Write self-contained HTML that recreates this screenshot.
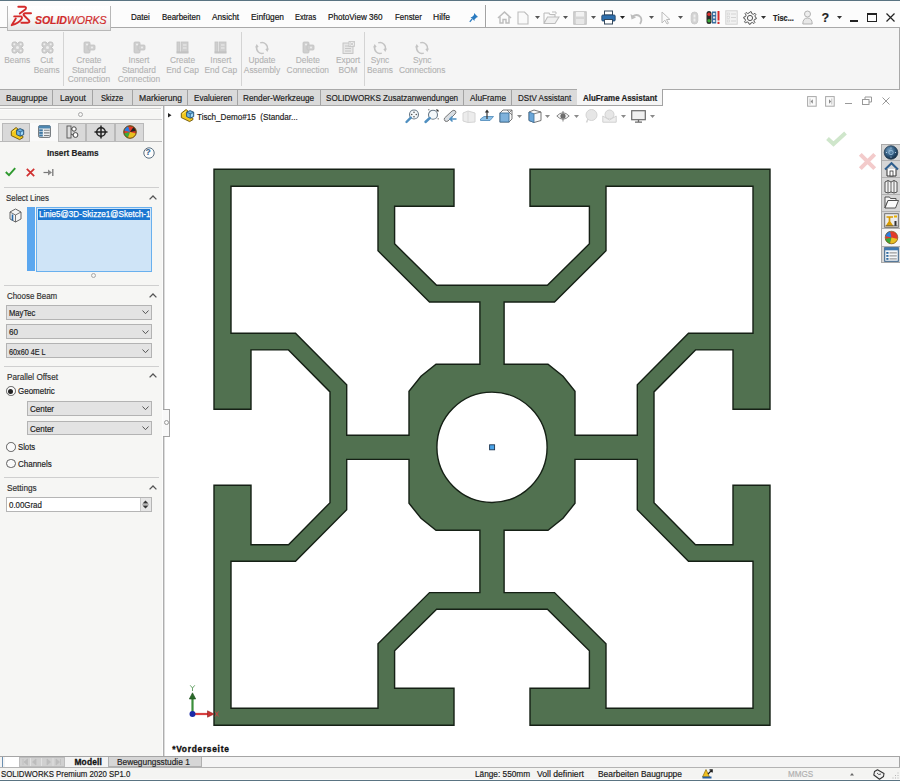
<!DOCTYPE html>
<html><head><meta charset="utf-8">
<style>
*{margin:0;padding:0;box-sizing:border-box}
html,body{width:900px;height:781px;overflow:hidden;background:#f5f5f5;font-family:"Liberation Sans",sans-serif;color:#222;position:relative}
.a{position:absolute}
.t{position:absolute;white-space:nowrap;line-height:1;-webkit-text-stroke-width:0.18px}
svg{overflow:visible}
</style></head><body>
<div class="a" style="left:0px;top:0px;width:900px;height:1px;background:#5a7482;"></div>
<div class="a" style="left:0px;top:1px;width:900px;height:26px;background:#fcfcfc;"></div>
<div class="a" style="left:0px;top:27px;width:900px;height:1px;background:#a9a9a9;"></div>
<div class="a" style="left:0px;top:28px;width:899px;height:61px;background:#f5f5f5;"></div>
<div class="a" style="left:899px;top:28px;width:1px;height:61px;background:#a9a9a9;"></div>
<div class="a" style="left:0px;top:89px;width:900px;height:1px;background:#a9a9a9;"></div>
<div class="a" style="left:164px;top:105px;width:736px;height:651px;background:#ffffff;"></div>
<div class="a" style="left:663px;top:90px;width:237px;height:15px;background:#ffffff;"></div>
<div class="a" style="left:0px;top:105px;width:163px;height:651px;background:#f6f6f4;"></div>
<div class="a" style="left:162px;top:105px;width:1px;height:651px;background:#fcfcfc;"></div>
<div class="a" style="left:163px;top:105px;width:1px;height:651px;background:#aeaeae;"></div>
<div class="a" style="left:164px;top:105px;width:1px;height:651px;background:#dcdcdc;"></div>
<div class="a" style="left:7px;top:5.5px;width:104px;height:25px;background:linear-gradient(#ffffff 0%,#fafafa 45%,#e6e6e6 100%);border:1px solid #b8b8b8;border-top:none"></div>
<svg class="a" style="left:8px;top:4px" width="26" height="24" viewBox="0 0 26 24">
<path d="M10.3 2.8 L17 2.8 Q18.6 3.2 17.6 5.2 L11.8 9.6" fill="none" stroke="#d42a2a" stroke-width="1.9" stroke-linecap="round" stroke-linejoin="round"/>
<path d="M6.2 12.4 L13 12.4 Q14.6 13 13.6 15 Q10.5 19.5 3.7 21.2 L7.8 14.6" fill="none" stroke="#d42a2a" stroke-width="1.9" stroke-linecap="round" stroke-linejoin="round"/>
<path d="M23 9.3 L17 9.3 Q15 9.6 15.8 11.3 L21 16.4 Q22.2 18.4 19.6 18.7 L13.4 18.7" fill="none" stroke="#d42a2a" stroke-width="2" stroke-linecap="round" stroke-linejoin="round"/>
</svg>
<div class="t" style="left:35px;top:14.6px;font-size:10.6px;color:#d02a2a;font-style:italic;letter-spacing:-0.1px"><b>SOLID</b>WORKS</div>
<div class="t" style="left:130.7px;top:12.9px;font-size:8.9px;color:#111;transform:scaleX(0.9096);transform-origin:0 0;">Datei</div>
<div class="t" style="left:161.6px;top:12.9px;font-size:8.9px;color:#111;transform:scaleX(0.892);transform-origin:0 0;">Bearbeiten</div>
<div class="t" style="left:211.8px;top:12.9px;font-size:8.9px;color:#111;transform:scaleX(0.9285);transform-origin:0 0;">Ansicht</div>
<div class="t" style="left:250.7px;top:12.9px;font-size:8.9px;color:#111;transform:scaleX(0.942);transform-origin:0 0;">Einfügen</div>
<div class="t" style="left:295.4px;top:12.9px;font-size:8.9px;color:#111;transform:scaleX(0.8445);transform-origin:0 0;">Extras</div>
<div class="t" style="left:328.4px;top:12.9px;font-size:8.9px;color:#111;transform:scaleX(0.9177);transform-origin:0 0;">PhotoView 360</div>
<div class="t" style="left:394.9px;top:12.9px;font-size:8.9px;color:#111;transform:scaleX(0.8915);transform-origin:0 0;">Fenster</div>
<div class="t" style="left:433.3px;top:12.9px;font-size:8.9px;color:#111;transform:scaleX(0.9604);transform-origin:0 0;">Hilfe</div>
<div class="a" style="left:485px;top:5px;width:1px;height:22px;background:#a3a3a3;"></div>
<div class="a" style="left:486px;top:5px;width:1px;height:22px;background:#ffffff;"></div>
<svg class="a" style="left:469px;top:12px" width="10" height="11" viewBox="0 0 10 11">
<path d="M5 1 L9 5 L7.5 5.5 L5.5 7.5 L5.5 9 L1.5 5 L3 5 L5 3 Z" fill="#2a7ac0"/><path d="M3.2 6.8 L0.8 9.8" stroke="#2a7ac0" stroke-width="1.3"/></svg>
<svg class="a" style="left:497px;top:11px" width="15" height="13" viewBox="0 0 15 13">
<path d="M1 7 L7.5 1 L14 7" fill="none" stroke="#bdbdbd" stroke-width="1.6"/><path d="M3 6 L3 12 L6 12 L6 8.5 L9 8.5 L9 12 L12 12 L12 6" fill="none" stroke="#bdbdbd" stroke-width="1.4"/></svg>
<svg class="a" style="left:517px;top:11px" width="12" height="14" viewBox="0 0 12 14">
<path d="M1 1 L7.5 1 L11 4.5 L11 13 L1 13 Z" fill="#fafafa" stroke="#bdbdbd" stroke-width="1.1"/></svg>
<svg class="a" style="left:534.5px;top:16.0px" width="5" height="3"><path d="M0 0 L5 0 L2.5 3Z" fill="#555"/></svg>
<svg class="a" style="left:543px;top:11px" width="17" height="14" viewBox="0 0 17 14">
<path d="M1 2 L6 2 L7 3.5 L12 3.5 L12 6 M1 2 L1 12.5 L12 12.5 L16 6 L4.5 6 L1 12.5" fill="#f0f0f0" stroke="#bdbdbd" stroke-width="1.1"/><path d="M9 1 L13 1 L13 3" fill="none" stroke="#bdbdbd" stroke-width="1"/></svg>
<svg class="a" style="left:563.1px;top:16.0px" width="5" height="3"><path d="M0 0 L5 0 L2.5 3Z" fill="#555"/></svg>
<svg class="a" style="left:573px;top:11px" width="14" height="14" viewBox="0 0 14 14">
<rect x="0.8" y="0.8" width="12.4" height="12.4" fill="#d6d6d6" stroke="#bdbdbd" stroke-width="1"/><rect x="3" y="1" width="8" height="4.5" fill="#f2f2f2"/><rect x="3" y="8" width="8" height="5" fill="#e8e8e8"/></svg>
<svg class="a" style="left:591.2px;top:16.0px" width="5" height="3"><path d="M0 0 L5 0 L2.5 3Z" fill="#555"/></svg>
<svg class="a" style="left:601px;top:10px" width="15" height="15" viewBox="0 0 15 15">
<rect x="3.5" y="1" width="8" height="4" fill="#fff" stroke="#33475a" stroke-width="1"/>
<rect x="0.8" y="5" width="13.4" height="6" rx="1" fill="#2d6fae" stroke="#1f3f60" stroke-width="0.8"/>
<rect x="3.5" y="9.5" width="8" height="4.5" fill="#fff" stroke="#33475a" stroke-width="1"/></svg>
<svg class="a" style="left:620.0px;top:16.0px" width="5" height="3"><path d="M0 0 L5 0 L2.5 3Z" fill="#222"/></svg>
<svg class="a" style="left:630px;top:12px" width="13" height="13" viewBox="0 0 13 13">
<path d="M2 5 Q7 1 10.5 5 Q12.5 8 10 12" fill="none" stroke="#bdbdbd" stroke-width="1.8"/><path d="M0.5 2 L1.5 7.5 L6 5.5Z" fill="#bdbdbd"/></svg>
<svg class="a" style="left:648.5px;top:16.0px" width="5" height="3"><path d="M0 0 L5 0 L2.5 3Z" fill="#555"/></svg>
<svg class="a" style="left:661px;top:11px" width="10" height="14" viewBox="0 0 10 14">
<path d="M1 1 L1 12 L3.8 9.2 L6 13 L7.5 12.2 L5.5 8.5 L9 8.5 Z" fill="#fafafa" stroke="#bdbdbd" stroke-width="1"/></svg>
<svg class="a" style="left:677.5px;top:16.0px" width="5" height="3"><path d="M0 0 L5 0 L2.5 3Z" fill="#555"/></svg>
<svg class="a" style="left:690px;top:11px" width="9" height="14" viewBox="0 0 9 14">
<rect x="1.2" y="1" width="6.6" height="12" rx="3.3" fill="#d2d2d2" stroke="#c8c8c8" stroke-width="0.8"/><rect x="3.5" y="3.5" width="2" height="3" fill="#eee"/><rect x="3.5" y="7.5" width="2" height="3" fill="#eee"/></svg>
<svg class="a" style="left:706px;top:10px" width="15" height="15" viewBox="0 0 15 15">
<rect x="0.5" y="1" width="5" height="13" rx="2.5" fill="#2a2a2a"/><circle cx="3" cy="4.3" r="1.7" fill="#e23030"/><circle cx="3" cy="10.7" r="1.7" fill="#38a838"/>
<rect x="6" y="1.5" width="4.2" height="12" fill="#3a6f9e"/><rect x="7" y="3" width="2.2" height="2" fill="#d8e4ee"/><rect x="7" y="6.5" width="2.2" height="2" fill="#d8e4ee"/><rect x="7" y="10" width="2.2" height="2" fill="#d8e4ee"/>
<rect x="11.5" y="1" width="2" height="9.5" fill="#d42a2a"/><rect x="11.5" y="11.8" width="2" height="2.2" fill="#d42a2a"/></svg>
<svg class="a" style="left:725px;top:10px" width="13" height="15" viewBox="0 0 13 15">
<rect x="0.8" y="0.8" width="11.4" height="13.4" fill="#f2f2f2" stroke="#d2d2d2" stroke-width="1"/>
<path d="M6 4 L11 4 M6 7.5 L11 7.5 M6 11 L11 11" stroke="#d4d4d4" stroke-width="1"/><rect x="2.2" y="3" width="2.2" height="2" fill="none" stroke="#d4d4d4" stroke-width="0.7"/><rect x="2.2" y="6.5" width="2.2" height="2" fill="none" stroke="#d4d4d4" stroke-width="0.7"/><rect x="2.2" y="10" width="2.2" height="2" fill="none" stroke="#d4d4d4" stroke-width="0.7"/></svg>
<svg class="a" style="left:743px;top:11px" width="14" height="14" viewBox="0 0 14 14">
<path d="M7 0.8 L8.4 0.8 L8.8 2.6 L10.3 3.3 L11.9 2.3 L12.9 3.3 L11.9 4.9 L12.5 6.4 L13.2 6.6 L13.2 8 L11.5 8.4 L10.9 9.9 L11.9 11.5 L10.9 12.5 L9.3 11.5 L7.8 12.1 L7.4 13.2 L6 13.2 L5.6 11.5 L4.1 10.9 L2.5 11.9 L1.5 10.9 L2.5 9.3 L1.9 7.8 L0.8 7.4 L0.8 6 L2.5 5.6 L3.1 4.1 L2.1 2.5 L3.1 1.5 L4.7 2.5 L6.2 1.9 Z" fill="#f8f8f8" stroke="#555" stroke-width="1"/>
<circle cx="7" cy="7" r="2.6" fill="none" stroke="#555" stroke-width="1"/></svg>
<svg class="a" style="left:761.4px;top:16.0px" width="5" height="3"><path d="M0 0 L5 0 L2.5 3Z" fill="#333"/></svg>
<div class="t" style="left:773.4px;top:13.5px;font-size:8.6px;font-weight:bold;color:#222;transform:scaleX(0.86);transform-origin:0 0;">Tisc...</div>
<svg class="a" style="left:802px;top:10px" width="11" height="15" viewBox="0 0 11 15">
<circle cx="5.5" cy="4" r="3" fill="#eee" stroke="#aaa" stroke-width="0.9"/><path d="M0.8 14 Q0.8 8 5.5 8 Q10.2 8 10.2 14Z" fill="#e8e8e8" stroke="#aaa" stroke-width="0.9"/></svg>
<div class="t" style="left:821.5px;top:11.5px;font-size:12.5px;font-weight:bold;color:#222">?</div>
<svg class="a" style="left:836.5px;top:16.0px" width="5" height="3"><path d="M0 0 L5 0 L2.5 3Z" fill="#333"/></svg>
<div class="a" style="left:850px;top:19.5px;width:7.5px;height:2px;background:#222;"></div>
<div class="a" style="left:867px;top:13px;width:10px;height:9px;border:1.2px solid #222;border-top-width:2px"></div>
<svg class="a" style="left:886px;top:13px" width="9" height="9"><path d="M0.5 0.5 L8.5 8.5 M8.5 0.5 L0.5 8.5" stroke="#222" stroke-width="1.2"/></svg>
<div class="a" style="left:63px;top:32px;width:1px;height:54px;background:#d4d4d4;"></div>
<div class="a" style="left:240.5px;top:32px;width:1px;height:54px;background:#d4d4d4;"></div>
<div class="a" style="left:364px;top:32px;width:1px;height:54px;background:#d4d4d4;"></div>
<svg class="a" style="left:10.7px;top:41.0px" width="13" height="13" viewBox="0 0 13 13">
<path d="M1 3 Q1 1 3 1 L5 1 L6.5 3 L8 1 L10 1 Q12 1 12 3 L12 5 L10 6.5 L12 8 L12 10 Q12 12 10 12 L8 12 L6.5 10 L5 12 L3 12 Q1 12 1 10 L1 8 L3 6.5 L1 5 Z" fill="#cfcfcf" stroke="#c2c2c2" stroke-width="1"/>
<circle cx="6.5" cy="6.5" r="1.5" fill="#eee"/><circle cx="3.3" cy="3.3" r="1" fill="#eee"/><circle cx="9.7" cy="3.3" r="1" fill="#eee"/><circle cx="3.3" cy="9.7" r="1" fill="#eee"/><circle cx="9.7" cy="9.7" r="1" fill="#eee"/></svg>
<svg class="a" style="left:40.5px;top:41.0px" width="13" height="13" viewBox="0 0 13 13">
<path d="M1 3 Q1 1 3 1 L5 1 L6.5 3 L8 1 L10 1 Q12 1 12 3 L12 5 L10 6.5 L12 8 L12 10 Q12 12 10 12 L8 12 L6.5 10 L5 12 L3 12 Q1 12 1 10 L1 8 L3 6.5 L1 5 Z" fill="#cfcfcf" stroke="#c2c2c2" stroke-width="1"/>
<circle cx="6.5" cy="6.5" r="1.5" fill="#eee"/><circle cx="3.3" cy="3.3" r="1" fill="#eee"/><circle cx="9.7" cy="3.3" r="1" fill="#eee"/><circle cx="3.3" cy="9.7" r="1" fill="#eee"/><circle cx="9.7" cy="9.7" r="1" fill="#eee"/></svg>
<svg class="a" style="left:81.9px;top:41.0px" width="14" height="13" viewBox="0 0 14 13">
<rect x="2" y="1" width="6" height="11" rx="1" fill="#cfcfcf" stroke="#c2c2c2" stroke-width="0.8"/><rect x="6" y="4" width="7" height="5" rx="1" fill="#cfcfcf" stroke="#c2c2c2" stroke-width="0.8"/><circle cx="5" cy="3.5" r="1" fill="#eee"/><circle cx="10" cy="6.5" r="1" fill="#eee"/></svg>
<svg class="a" style="left:131.9px;top:41.0px" width="14" height="13" viewBox="0 0 14 13">
<rect x="2" y="1" width="6" height="11" rx="1" fill="#cfcfcf" stroke="#c2c2c2" stroke-width="0.8"/><rect x="6" y="4" width="7" height="5" rx="1" fill="#cfcfcf" stroke="#c2c2c2" stroke-width="0.8"/><circle cx="5" cy="3.5" r="1" fill="#eee"/><circle cx="10" cy="6.5" r="1" fill="#eee"/></svg>
<svg class="a" style="left:176.0px;top:41.0px" width="13" height="13" viewBox="0 0 13 13">
<rect x="1" y="1" width="3" height="10" fill="#cfcfcf" stroke="#c2c2c2" stroke-width="0.8"/><rect x="5.5" y="1" width="6.5" height="10" fill="#cfcfcf" stroke="#c2c2c2" stroke-width="0.8"/><rect x="0.5" y="10.5" width="12" height="2" fill="#c2c2c2"/><path d="M7 4 L10.5 4 M7 7 L10.5 7" stroke="#eee" stroke-width="1"/></svg>
<svg class="a" style="left:214.3px;top:41.0px" width="13" height="13" viewBox="0 0 13 13">
<rect x="1" y="1" width="3" height="10" fill="#cfcfcf" stroke="#c2c2c2" stroke-width="0.8"/><rect x="5.5" y="1" width="6.5" height="10" fill="#cfcfcf" stroke="#c2c2c2" stroke-width="0.8"/><rect x="0.5" y="10.5" width="12" height="2" fill="#c2c2c2"/><path d="M7 4 L10.5 4 M7 7 L10.5 7" stroke="#eee" stroke-width="1"/></svg>
<svg class="a" style="left:255px;top:41px" width="14" height="14" viewBox="0 0 14 14">
<path d="M5.2 1.9 A5.4 5.4 0 0 1 12.2 8.4" fill="none" stroke="#c4c4c4" stroke-width="1.5"/><path d="M8.8 12.1 A5.4 5.4 0 0 1 1.8 5.6" fill="none" stroke="#c4c4c4" stroke-width="1.5"/>
<path d="M10.3 8 L12.3 11 L14 7.6Z" fill="#c4c4c4"/><path d="M3.7 6 L1.7 3 L0 6.4Z" fill="#c4c4c4"/></svg>
<svg class="a" style="left:300.8px;top:41.0px" width="14" height="13" viewBox="0 0 14 13">
<rect x="2" y="1" width="6" height="11" rx="1" fill="#cfcfcf" stroke="#c2c2c2" stroke-width="0.8"/><rect x="6" y="4" width="7" height="5" rx="1" fill="#cfcfcf" stroke="#c2c2c2" stroke-width="0.8"/><circle cx="5" cy="3.5" r="1" fill="#eee"/><circle cx="10" cy="6.5" r="1" fill="#eee"/></svg>
<svg class="a" style="left:341.5px;top:41.0px" width="13" height="13" viewBox="0 0 13 13">
<rect x="1" y="2" width="10" height="10.5" fill="#e6e6e6" stroke="#c2c2c2" stroke-width="0.9"/><path d="M3 5 L9 5 M3 7.5 L9 7.5 M3 10 L9 10" stroke="#c2c2c2" stroke-width="0.9"/><rect x="7" y="0.5" width="5.5" height="5" fill="#eee" stroke="#c2c2c2" stroke-width="0.8"/><path d="M8 1.5 L11.5 4.5 M11.5 1.5 L8 4.5" stroke="#c2c2c2" stroke-width="0.8"/></svg>
<svg class="a" style="left:373px;top:41px" width="14" height="14" viewBox="0 0 14 14">
<path d="M5.2 1.9 A5.4 5.4 0 0 1 12.2 8.4" fill="none" stroke="#c4c4c4" stroke-width="1.5"/><path d="M8.8 12.1 A5.4 5.4 0 0 1 1.8 5.6" fill="none" stroke="#c4c4c4" stroke-width="1.5"/>
<path d="M10.3 8 L12.3 11 L14 7.6Z" fill="#c4c4c4"/><path d="M3.7 6 L1.7 3 L0 6.4Z" fill="#c4c4c4"/></svg>
<svg class="a" style="left:415.2px;top:41px" width="14" height="14" viewBox="0 0 14 14">
<path d="M5.2 1.9 A5.4 5.4 0 0 1 12.2 8.4" fill="none" stroke="#c4c4c4" stroke-width="1.5"/><path d="M8.8 12.1 A5.4 5.4 0 0 1 1.8 5.6" fill="none" stroke="#c4c4c4" stroke-width="1.5"/>
<path d="M10.3 8 L12.3 11 L14 7.6Z" fill="#c4c4c4"/><path d="M3.7 6 L1.7 3 L0 6.4Z" fill="#c4c4c4"/></svg>
<div class="t" style="left:-17.8px;top:56.4px;width:70px;text-align:center;font-size:8.4px;color:#b2b2b2;-webkit-text-stroke-width:0.1px">Beams</div>
<div class="t" style="left:11.7px;top:56.4px;width:70px;text-align:center;font-size:8.4px;color:#b2b2b2;-webkit-text-stroke-width:0.1px">Cut</div>
<div class="t" style="left:11.7px;top:65.8px;width:70px;text-align:center;font-size:8.4px;color:#b2b2b2;-webkit-text-stroke-width:0.1px">Beams</div>
<div class="t" style="left:53.9px;top:56.4px;width:70px;text-align:center;font-size:8.4px;color:#b2b2b2;-webkit-text-stroke-width:0.1px">Create</div>
<div class="t" style="left:53.9px;top:65.8px;width:70px;text-align:center;font-size:8.4px;color:#b2b2b2;-webkit-text-stroke-width:0.1px">Standard</div>
<div class="t" style="left:53.9px;top:75.2px;width:70px;text-align:center;font-size:8.4px;color:#b2b2b2;-webkit-text-stroke-width:0.1px">Connection</div>
<div class="t" style="left:103.9px;top:56.4px;width:70px;text-align:center;font-size:8.4px;color:#b2b2b2;-webkit-text-stroke-width:0.1px">Insert</div>
<div class="t" style="left:103.9px;top:65.8px;width:70px;text-align:center;font-size:8.4px;color:#b2b2b2;-webkit-text-stroke-width:0.1px">Standard</div>
<div class="t" style="left:103.9px;top:75.2px;width:70px;text-align:center;font-size:8.4px;color:#b2b2b2;-webkit-text-stroke-width:0.1px">Connection</div>
<div class="t" style="left:147.5px;top:56.4px;width:70px;text-align:center;font-size:8.4px;color:#b2b2b2;-webkit-text-stroke-width:0.1px">Create</div>
<div class="t" style="left:147.5px;top:65.8px;width:70px;text-align:center;font-size:8.4px;color:#b2b2b2;-webkit-text-stroke-width:0.1px">End Cap</div>
<div class="t" style="left:185.8px;top:56.4px;width:70px;text-align:center;font-size:8.4px;color:#b2b2b2;-webkit-text-stroke-width:0.1px">Insert</div>
<div class="t" style="left:185.8px;top:65.8px;width:70px;text-align:center;font-size:8.4px;color:#b2b2b2;-webkit-text-stroke-width:0.1px">End Cap</div>
<div class="t" style="left:227.0px;top:56.4px;width:70px;text-align:center;font-size:8.4px;color:#b2b2b2;-webkit-text-stroke-width:0.1px">Update</div>
<div class="t" style="left:227.0px;top:65.8px;width:70px;text-align:center;font-size:8.4px;color:#b2b2b2;-webkit-text-stroke-width:0.1px">Assembly</div>
<div class="t" style="left:272.8px;top:56.4px;width:70px;text-align:center;font-size:8.4px;color:#b2b2b2;-webkit-text-stroke-width:0.1px">Delete</div>
<div class="t" style="left:272.8px;top:65.8px;width:70px;text-align:center;font-size:8.4px;color:#b2b2b2;-webkit-text-stroke-width:0.1px">Connection</div>
<div class="t" style="left:313.0px;top:56.4px;width:70px;text-align:center;font-size:8.4px;color:#b2b2b2;-webkit-text-stroke-width:0.1px">Export</div>
<div class="t" style="left:313.0px;top:65.8px;width:70px;text-align:center;font-size:8.4px;color:#b2b2b2;-webkit-text-stroke-width:0.1px">BOM</div>
<div class="t" style="left:345.0px;top:56.4px;width:70px;text-align:center;font-size:8.4px;color:#b2b2b2;-webkit-text-stroke-width:0.1px">Sync</div>
<div class="t" style="left:345.0px;top:65.8px;width:70px;text-align:center;font-size:8.4px;color:#b2b2b2;-webkit-text-stroke-width:0.1px">Beams</div>
<div class="t" style="left:387.2px;top:56.4px;width:70px;text-align:center;font-size:8.4px;color:#b2b2b2;-webkit-text-stroke-width:0.1px">Sync</div>
<div class="t" style="left:387.2px;top:65.8px;width:70px;text-align:center;font-size:8.4px;color:#b2b2b2;-webkit-text-stroke-width:0.1px">Connections</div>
<div class="a" style="left:0px;top:90px;width:663px;height:15px;background:#dadada;"></div>
<div class="a" style="left:0px;top:105px;width:663px;height:1px;background:#a9a9a9;"></div>
<div class="a" style="left:52.0px;top:90px;width:1px;height:15px;background:#a3a3a3;"></div>
<div class="a" style="left:92.0px;top:90px;width:1px;height:15px;background:#a3a3a3;"></div>
<div class="a" style="left:132.3px;top:90px;width:1px;height:15px;background:#a3a3a3;"></div>
<div class="a" style="left:187.0px;top:90px;width:1px;height:15px;background:#a3a3a3;"></div>
<div class="a" style="left:237.0px;top:90px;width:1px;height:15px;background:#a3a3a3;"></div>
<div class="a" style="left:319.8px;top:90px;width:1px;height:15px;background:#a3a3a3;"></div>
<div class="a" style="left:463.4px;top:90px;width:1px;height:15px;background:#a3a3a3;"></div>
<div class="a" style="left:511.2px;top:90px;width:1px;height:15px;background:#a3a3a3;"></div>
<div class="a" style="left:576.5px;top:89px;width:86px;height:16px;background:#f5f5f5;"></div>
<div class="a" style="left:662px;top:89px;width:1px;height:17px;background:#a3a3a3;"></div>
<div class="a" style="left:576.5px;top:105px;width:86.5px;height:1px;background:#a3a3a3;"></div>
<div class="t" style="left:5.6px;top:93.8px;font-size:8.9px;color:#1e1e1e;transform:scaleX(0.9552);transform-origin:0 0;">Baugruppe</div>
<div class="t" style="left:59.7px;top:93.8px;font-size:8.9px;color:#1e1e1e;transform:scaleX(0.9692);transform-origin:0 0;">Layout</div>
<div class="t" style="left:101.4px;top:93.8px;font-size:8.9px;color:#1e1e1e;transform:scaleX(0.8469);transform-origin:0 0;">Skizze</div>
<div class="t" style="left:138.9px;top:93.8px;font-size:8.9px;color:#1e1e1e;transform:scaleX(0.9681);transform-origin:0 0;">Markierung</div>
<div class="t" style="left:193.6px;top:93.8px;font-size:8.9px;color:#1e1e1e;transform:scaleX(0.9131);transform-origin:0 0;">Evaluieren</div>
<div class="t" style="left:243.3px;top:93.8px;font-size:8.9px;color:#1e1e1e;transform:scaleX(0.9272);transform-origin:0 0;">Render-Werkzeuge</div>
<div class="t" style="left:325.8px;top:93.8px;font-size:8.9px;color:#1e1e1e;transform:scaleX(0.911);transform-origin:0 0;">SOLIDWORKS Zusatzanwendungen</div>
<div class="t" style="left:470.0px;top:93.8px;font-size:8.9px;color:#1e1e1e;transform:scaleX(0.9357);transform-origin:0 0;">AluFrame</div>
<div class="t" style="left:517.5px;top:93.8px;font-size:8.9px;color:#1e1e1e;transform:scaleX(0.9055);transform-origin:0 0;">DStV Assistant</div>
<div class="t" style="left:582.8px;top:93.9px;font-size:8.8px;font-weight:bold;color:#1e1e1e;transform:scaleX(0.9013);transform-origin:0 0;">AluFrame Assistant</div>
<div class="a" style="left:0px;top:108px;width:162px;height:1px;background:#cfcfcf;"></div>
<div class="a" style="left:0px;top:109px;width:162px;height:1px;background:#fdfdfd;"></div>
<div class="a" style="left:161px;top:108px;width:1px;height:12px;background:#fdfdfd;"></div>
<div class="a" style="left:78.1px;top:111.9px;width:5px;height:5px;border:1px solid #a8a8a8;border-radius:50%"></div>
<div class="a" style="left:0px;top:119px;width:162px;height:1px;background:#cfcfcf;"></div>
<div class="a" style="left:1.7px;top:123px;width:28.0px;height:18px;background:#d9d9d9;border:1px solid #b9b9b9;border-bottom:none"></div>
<div class="a" style="left:58.3px;top:123px;width:28.0px;height:18px;background:#d9d9d9;border:1px solid #b9b9b9;border-bottom:none"></div>
<div class="a" style="left:86.3px;top:123px;width:29.0px;height:18px;background:#d9d9d9;border:1px solid #b9b9b9;border-bottom:none"></div>
<div class="a" style="left:115.3px;top:123px;width:28.9px;height:18px;background:#d9d9d9;border:1px solid #b9b9b9;border-bottom:none"></div>
<div class="a" style="left:0px;top:141px;width:29.7px;height:1px;background:#b9b9b9;"></div>
<div class="a" style="left:58.3px;top:141px;width:104px;height:1px;background:#b9b9b9;"></div>
<div class="a" style="left:29.7px;top:123px;width:28.6px;height:18px;background:#fafafa;"></div>
<svg class="a" style="left:7.5px;top:123.5px" width="16" height="16" viewBox="0 0 16 16">
<path d="M3.3 7.2 L8 3.6 L9.6 4.6 L9.2 10 L15 12.4 L15 13.6 L11.6 15.6 L3.3 11.6Z" fill="#f2c81c" stroke="#6e5400" stroke-width="0.9" stroke-linejoin="round"/>
<path d="M4.5 8 L8.4 5" stroke="#ffe98a" stroke-width="0.8"/>
<path d="M8.6 6.2 L12.1 4.6 L15.7 6.2 L15.7 10.6 L12.2 12.2 L8.6 10.6Z" fill="#6fb6e6" stroke="#234f73" stroke-width="0.9" stroke-linejoin="round"/>
<path d="M8.6 6.2 L12.2 7.8 L15.7 6.2 M12.2 7.8 L12.2 12.2" fill="none" stroke="#234f73" stroke-width="0.7"/><path d="M13 8.6 L14.9 7.7 L14.9 10 L13 10.9Z" fill="#a8dcf8"/></svg>
<svg class="a" style="left:37.5px;top:125px" width="13" height="13" viewBox="0 0 13 13">
<rect x="0.6" y="0.6" width="11.8" height="11.8" rx="1.5" fill="#eef0f2" stroke="#6a6f74" stroke-width="1"/>
<rect x="0.6" y="0.6" width="11.8" height="3" rx="1" fill="#4d86b0"/>
<rect x="1.2" y="4.3" width="3.6" height="2" fill="#3f78a3"/><rect x="1.2" y="6.9" width="3.6" height="2" fill="#3f78a3"/><rect x="1.2" y="9.5" width="3.6" height="2" fill="#3f78a3"/>
<path d="M6 5.3 L11.6 5.3 M6 7.9 L11.6 7.9 M6 10.5 L11.6 10.5" stroke="#7b7f83" stroke-width="1.1"/></svg>
<svg class="a" style="left:66px;top:124.5px" width="13" height="14" viewBox="0 0 13 14">
<path d="M2 1 L2 13" stroke="#555" stroke-width="1.2"/><rect x="1" y="1" width="4" height="12" fill="#ddd" stroke="#555" stroke-width="0.9"/>
<circle cx="8" cy="4" r="2.2" fill="#fff" stroke="#444" stroke-width="1"/><circle cx="9.5" cy="10" r="2.4" fill="#fff" stroke="#444" stroke-width="1"/><path d="M5 4 L6 4 M5 9 L7 10" stroke="#444" stroke-width="0.9"/></svg>
<svg class="a" style="left:94px;top:124.5px" width="14" height="14" viewBox="0 0 14 14">
<circle cx="7" cy="7" r="4.3" fill="none" stroke="#222" stroke-width="1.5"/><path d="M7 0.5 L7 13.5 M0.5 7 L13.5 7" stroke="#222" stroke-width="1.5"/></svg>
<svg class="a" style="left:123px;top:124.5px" width="14" height="14" viewBox="0 0 14 14">
<circle cx="7" cy="7" r="6.2" fill="#e23a2a" stroke="#6a4a10" stroke-width="0.8"/>
<path d="M7 7 L1 5.5 A6.2 6.2 0 0 1 5 1.1Z" fill="#2a7de0"/><path d="M7 7 L1 8.5 A6.2 6.2 0 0 0 5 12.8Z" fill="#3aaa3a"/><path d="M7 7 L13 8.5 A6.2 6.2 0 0 1 5 12.8Z" fill="#e8c020"/><path d="M7 7 L10.5 2 A6.2 6.2 0 0 1 13 6Z" fill="#222"/><circle cx="7" cy="7" r="6.2" fill="none" stroke="#6a4a10" stroke-width="0.8"/></svg>
<div class="t" style="left:47.0px;top:149.1px;font-size:8.8px;font-weight:bold;color:#222;transform:scaleX(0.9318);transform-origin:0 0;">Insert Beams</div>
<svg class="a" style="left:142.5px;top:147px" width="12" height="12" viewBox="0 0 12 12"><circle cx="6" cy="6" r="5.2" fill="#fdfdfd" stroke="#5b6f80" stroke-width="1"/></svg>
<div class="t" style="left:145.6px;top:148.3px;font-size:8.5px;font-weight:bold;color:#3a6690">?</div>
<svg class="a" style="left:5px;top:167px" width="11" height="10" viewBox="0 0 11 10"><path d="M0.8 5 L4 8.2 L10.2 1.2" fill="none" stroke="#2f9a2f" stroke-width="1.9"/></svg>
<svg class="a" style="left:26px;top:168px" width="9" height="9" viewBox="0 0 9 9"><path d="M0.8 0.8 L8.2 8.2 M8.2 0.8 L0.8 8.2" stroke="#d03030" stroke-width="1.7"/></svg>
<svg class="a" style="left:43px;top:168px" width="11" height="9" viewBox="0 0 11 9"><path d="M0.5 4.5 L7 4.5" stroke="#777" stroke-width="1.2"/><path d="M5 1.5 L9 4.5 L5 7.5Z" fill="#888"/><path d="M9.8 1 L9.8 8" stroke="#777" stroke-width="1.3"/></svg>
<div class="a" style="left:4px;top:187px;width:154.5px;height:1px;background:#cfcfcf;"></div>
<div class="t" style="left:6.3px;top:194.3px;font-size:8.9px;color:#333;transform:scaleX(0.8868);transform-origin:0 0;">Select Lines</div>
<svg class="a" style="left:149px;top:194.8px" width="8" height="5" viewBox="0 0 8 5"><path d="M0.6 4.4 L4 1 L7.4 4.4" fill="none" stroke="#555" stroke-width="1.3"/></svg>
<svg class="a" style="left:8.5px;top:208px" width="13" height="15" viewBox="0 0 13 15">
<path d="M1 4 L6.5 1 L12 4 L12 11 L6.5 14 L1 11Z" fill="#f4f4f4" stroke="#555" stroke-width="0.9"/><path d="M1 4 L6.5 7 L12 4 M6.5 7 L6.5 14" fill="none" stroke="#555" stroke-width="0.8"/><path d="M3.5 6.5 L3.5 12.5" stroke="#2b6aa8" stroke-width="1.6"/></svg>
<div class="a" style="left:27px;top:207px;width:8px;height:64px;background:#5ba7ef;"></div>
<div class="a" style="left:36px;top:207px;width:116px;height:65px;background:#cfe4f7;border:1.3px solid #69b0ee"></div>
<div class="a" style="left:37.5px;top:208.7px;width:112.8px;height:11.6px;background:#1b76d1;"></div>
<div class="a" style="left:39.4px;top:209px;width:110.6px;height:11px;overflow:hidden"><div class="t" style="left:0;top:0.7px;font-size:9px;color:#fff;transform:scaleX(0.9);transform-origin:0 0;-webkit-text-stroke-width:0.25px">Linie5@3D-Skizze1@Sketch-1@</div></div>
<div class="a" style="left:90.9px;top:272.5px;width:5px;height:5px;border:1px solid #a8a8a8;border-radius:50%"></div>
<div class="a" style="left:4px;top:285px;width:154.5px;height:1px;background:#cfcfcf;"></div>
<div class="t" style="left:6.7px;top:291.9px;font-size:8.9px;color:#333;transform:scaleX(0.8918);transform-origin:0 0;">Choose Beam</div>
<svg class="a" style="left:149px;top:292.8px" width="8" height="5" viewBox="0 0 8 5"><path d="M0.6 4.4 L4 1 L7.4 4.4" fill="none" stroke="#555" stroke-width="1.3"/></svg>
<div class="a" style="left:6.3px;top:305.1px;width:145.5px;height:14.6px;background:#e3e3e3;border:1px solid #b3b3b3"></div>
<div class="t" style="left:9.4px;top:309.2px;font-size:8.9px;color:#222;transform:scaleX(0.8577);transform-origin:0 0;">MayTec</div>
<svg class="a" style="left:141.6px;top:310.4px" width="7" height="4.5" viewBox="0 0 7 4.5"><path d="M0.5 0.5 L3.5 3.7 L6.5 0.5" fill="none" stroke="#555" stroke-width="1"/></svg>
<div class="a" style="left:6.3px;top:324.1px;width:145.5px;height:14.7px;background:#e3e3e3;border:1px solid #b3b3b3"></div>
<div class="t" style="left:9.4px;top:328.2px;font-size:8.9px;color:#222;transform:scaleX(0.915);transform-origin:0 0;">60</div>
<svg class="a" style="left:141.6px;top:329.5px" width="7" height="4.5" viewBox="0 0 7 4.5"><path d="M0.5 0.5 L3.5 3.7 L6.5 0.5" fill="none" stroke="#555" stroke-width="1"/></svg>
<div class="a" style="left:6.3px;top:343.4px;width:145.5px;height:14.9px;background:#e3e3e3;border:1px solid #b3b3b3"></div>
<div class="t" style="left:9.4px;top:347.5px;font-size:8.9px;color:#222;transform:scaleX(0.815);transform-origin:0 0;">60x60 4E L</div>
<svg class="a" style="left:141.6px;top:348.9px" width="7" height="4.5" viewBox="0 0 7 4.5"><path d="M0.5 0.5 L3.5 3.7 L6.5 0.5" fill="none" stroke="#555" stroke-width="1"/></svg>
<div class="a" style="left:4px;top:365.5px;width:154.5px;height:1px;background:#cfcfcf;"></div>
<div class="t" style="left:6.9px;top:372.7px;font-size:8.9px;color:#333;transform:scaleX(0.9168);transform-origin:0 0;">Parallel Offset</div>
<svg class="a" style="left:149px;top:373.4px" width="8" height="5" viewBox="0 0 8 5"><path d="M0.6 4.4 L4 1 L7.4 4.4" fill="none" stroke="#555" stroke-width="1.3"/></svg>
<div class="a" style="left:6.000000000000001px;top:386.4px;width:9.6px;height:9.6px;border:1px solid #5f5f5f;border-radius:50%;background:#fafafa"></div>
<div class="a" style="left:8.3px;top:388.7px;width:5px;height:5px;border-radius:50%;background:#222"></div>
<div class="t" style="left:18.1px;top:387.3px;font-size:8.9px;color:#222;transform:scaleX(0.8989);transform-origin:0 0;">Geometric</div>
<div class="a" style="left:27.3px;top:401.2px;width:124.5px;height:14.4px;background:#e3e3e3;border:1px solid #b3b3b3"></div>
<div class="t" style="left:30.4px;top:405.3px;font-size:8.9px;color:#222;transform:scaleX(0.9022);transform-origin:0 0;">Center</div>
<svg class="a" style="left:141.6px;top:406.4px" width="7" height="4.5" viewBox="0 0 7 4.5"><path d="M0.5 0.5 L3.5 3.7 L6.5 0.5" fill="none" stroke="#555" stroke-width="1"/></svg>
<div class="a" style="left:27.3px;top:420.7px;width:124.5px;height:14.6px;background:#e3e3e3;border:1px solid #b3b3b3"></div>
<div class="t" style="left:30.4px;top:424.8px;font-size:8.9px;color:#222;transform:scaleX(0.9022);transform-origin:0 0;">Center</div>
<svg class="a" style="left:141.6px;top:426.0px" width="7" height="4.5" viewBox="0 0 7 4.5"><path d="M0.5 0.5 L3.5 3.7 L6.5 0.5" fill="none" stroke="#555" stroke-width="1"/></svg>
<div class="a" style="left:6.000000000000001px;top:442.0px;width:9.6px;height:9.6px;border:1px solid #5f5f5f;border-radius:50%;background:#fafafa"></div>
<div class="t" style="left:18.1px;top:442.7px;font-size:8.9px;color:#222;transform:scaleX(0.8693);transform-origin:0 0;">Slots</div>
<div class="a" style="left:6.000000000000001px;top:458.9px;width:9.6px;height:9.6px;border:1px solid #5f5f5f;border-radius:50%;background:#fafafa"></div>
<div class="t" style="left:18.1px;top:459.7px;font-size:8.9px;color:#222;transform:scaleX(0.8988);transform-origin:0 0;">Channels</div>
<div class="a" style="left:4px;top:477px;width:154.5px;height:1px;background:#cfcfcf;"></div>
<div class="t" style="left:6.6px;top:483.9px;font-size:8.9px;color:#333;transform:scaleX(0.9235);transform-origin:0 0;">Settings</div>
<svg class="a" style="left:149px;top:484.6px" width="8" height="5" viewBox="0 0 8 5"><path d="M0.6 4.4 L4 1 L7.4 4.4" fill="none" stroke="#555" stroke-width="1.3"/></svg>
<div class="a" style="left:6.2px;top:497.4px;width:145.4px;height:14.2px;background:#fff;border:1px solid #b5b5b5"></div>
<div class="t" style="left:9.1px;top:500.5px;font-size:8.9px;color:#222;transform:scaleX(0.8866);transform-origin:0 0;">0.00Grad</div>
<div class="a" style="left:139.9px;top:498.4px;width:10.7px;height:12.2px;background:#e6e6e6;border-left:1px solid #c8c8c8"></div>
<svg class="a" style="left:142px;top:500px" width="7" height="9" viewBox="0 0 7 9"><path d="M0.5 3.5 L3.5 0.5 L6.5 3.5Z M0.5 5.5 L3.5 8.5 L6.5 5.5Z" fill="#333"/><path d="M0 4.5 L7 4.5" stroke="#999" stroke-width="0.6"/></svg>
<div class="a" style="left:163px;top:409.3px;width:6.5px;height:27.4px;background:#f8f8f8;border:1px solid #a3a3a3;border-left:none"></div>
<div class="a" style="left:163.6px;top:420.0px;width:5px;height:5px;border:1px solid #999;border-radius:50%"></div>
<svg class="a" style="left:0;top:0" width="900" height="781">
<path fill-rule="evenodd" fill="#517150" stroke="#152015" stroke-width="1.4" stroke-linejoin="miter" d="M214.0,169.3 L454.0,169.3 L454.0,206.3 L394.6,206.3 L394.6,243.8 L436.6,285.3 L547.4,285.3 L589.4,243.8 L589.4,206.3 L530.0,206.3 L530.0,169.3 L770.0,169.3 L770.0,409.3 L733.0,409.3 L733.0,349.9 L695.5,349.9 L654.0,391.9 L654.0,502.7 L695.5,544.7 L733.0,544.7 L733.0,485.3 L770.0,485.3 L770.0,725.3 L530.0,725.3 L530.0,688.3 L589.4,688.3 L589.4,650.8 L547.4,609.3 L436.6,609.3 L394.6,650.8 L394.6,688.3 L454.0,688.3 L454.0,725.3 L214.0,725.3 L214.0,485.3 L251.0,485.3 L251.0,544.7 L288.5,544.7 L330.0,502.7 L330.0,391.9 L288.5,349.9 L251.0,349.9 L251.0,409.3 L214.0,409.3Z M231.0,186.3 L378.0,186.3 L378.0,250.8 L429.5,302.0 L479.9,302.0 L479.9,364.3 L436.0,364.3 L421.0,376.3 L409.0,391.3 L409.0,435.2 L346.7,435.2 L346.7,384.8 L295.5,333.3 L231.0,333.3Z M753.0,186.3 L753.0,333.3 L688.5,333.3 L637.3,384.8 L637.3,435.2 L575.0,435.2 L575.0,391.3 L563.0,376.3 L548.0,364.3 L504.1,364.3 L504.1,302.0 L554.5,302.0 L606.0,250.8 L606.0,186.3Z M753.0,708.3 L606.0,708.3 L606.0,643.8 L554.5,592.6 L504.1,592.6 L504.1,530.3 L548.0,530.3 L563.0,518.3 L575.0,503.3 L575.0,459.4 L637.3,459.4 L637.3,509.8 L688.5,561.3 L753.0,561.3Z M231.0,708.3 L231.0,561.3 L295.5,561.3 L346.7,509.8 L346.7,459.4 L409.0,459.4 L409.0,503.3 L421.0,518.3 L436.0,530.3 L479.9,530.3 L479.9,592.6 L429.5,592.6 L378.0,643.8 L378.0,708.3Z M436.9,447.3 A55.1,55.1 0 1,0 547.1,447.3 A55.1,55.1 0 1,0 436.9,447.3Z"/>
<rect x="489.6" y="444.8" width="5" height="5" fill="#4aa3e8" stroke="#1d3550" stroke-width="0.9"/>
</svg>
<svg class="a" style="left:168px;top:113px" width="4" height="5"><path d="M0 0 L3.5 2.3 L0 4.6Z" fill="#222"/></svg>
<svg class="a" style="left:178px;top:106px" width="16" height="16" viewBox="0 0 16 16">
<path d="M3.3 7.2 L8 3.6 L9.6 4.6 L9.2 10 L15 12.4 L15 13.6 L11.6 15.6 L3.3 11.6Z" fill="#f2c81c" stroke="#6e5400" stroke-width="0.9" stroke-linejoin="round"/>
<path d="M4.5 8 L8.4 5" stroke="#ffe98a" stroke-width="0.8"/>
<path d="M8.6 6.2 L12.1 4.6 L15.7 6.2 L15.7 10.6 L12.2 12.2 L8.6 10.6Z" fill="#6fb6e6" stroke="#234f73" stroke-width="0.9" stroke-linejoin="round"/>
<path d="M8.6 6.2 L12.2 7.8 L15.7 6.2 M12.2 7.8 L12.2 12.2" fill="none" stroke="#234f73" stroke-width="0.7"/><path d="M13 8.6 L14.9 7.7 L14.9 10 L13 10.9Z" fill="#a8dcf8"/></svg>
<div class="t" style="left:196.7px;top:112.9px;font-size:8.9px;color:#222;transform:scaleX(0.915);transform-origin:0 0;">Tisch_Demo#15&nbsp; (Standar...</div>
<svg class="a" style="left:405px;top:109px" width="15" height="14" viewBox="0 0 15 14">
<circle cx="9" cy="5.5" r="4.5" fill="#f4f8fb" stroke="#6a7a88" stroke-width="1.1"/><path d="M5.8 8.7 L1.5 13" stroke="#4f8fc0" stroke-width="2.4" stroke-linecap="round"/>
<circle cx="9" cy="3.2" r="0.8" fill="#555"/><circle cx="9" cy="7.8" r="0.8" fill="#555"/><circle cx="6.7" cy="5.5" r="0.8" fill="#555"/><circle cx="11.3" cy="5.5" r="0.8" fill="#555"/></svg>
<svg class="a" style="left:423.5px;top:109px" width="15" height="14" viewBox="0 0 15 14">
<circle cx="9" cy="5.8" r="4.5" fill="#f4f8fb" stroke="#6a7a88" stroke-width="1.1"/><path d="M5.8 9 L1.5 13" stroke="#4f8fc0" stroke-width="2.4" stroke-linecap="round"/>
<path d="M4 0.8 L6 0.8 M12 0.8 L14.2 0.8 L14.2 3 M14.2 9 L14.2 11" stroke="#777" stroke-width="1" stroke-dasharray="1.5 1"/></svg>
<svg class="a" style="left:443px;top:109px" width="14" height="14" viewBox="0 0 14 14">
<path d="M1.5 9 L9 2 Q11 0.5 12.5 2 Q13.5 3.5 12 5 L5 12 Q3 13 2 12 Q0.8 10.5 1.5 9Z" fill="#d8dde2" stroke="#777" stroke-width="1"/><path d="M13.5 10 L7 10 M9.5 7.5 L7 10 L9.5 12.5" fill="none" stroke="#4f8fc0" stroke-width="1.5"/></svg>
<svg class="a" style="left:461.5px;top:109.5px" width="14" height="13" viewBox="0 0 14 13">
<path d="M1 3 L6 1 L13 3 L13 12 L6 12.5 L1 11Z" fill="#ececec" stroke="#d4d4d4" stroke-width="1"/><path d="M6 1 L6 12.5" stroke="#d8d8d8" stroke-width="1"/></svg>
<svg class="a" style="left:480px;top:109px" width="14" height="14" viewBox="0 0 14 14">
<path d="M0.5 10 L4 7.5 L13.5 7.5 L10 11.5 L0.5 11.5Z" fill="#8ec2e8" stroke="#4a87b8" stroke-width="0.8"/><path d="M7 10 L7 2" stroke="#333" stroke-width="1.2"/><path d="M4.8 3.5 L7 0.5 L9.2 3.5Z" fill="#333"/></svg>
<svg class="a" style="left:498.5px;top:109px" width="14" height="14" viewBox="0 0 14 14">
<path d="M1 4 L4 1 L13 1 L13 10 L10 13 L1 13Z" fill="#fafafa" stroke="#666" stroke-width="0.9"/><rect x="1" y="4" width="9" height="9" fill="#7fb2dc" stroke="#3f6f98" stroke-width="0.9"/><path d="M10 4 L13 1 M8 1 L13 6" stroke="#666" stroke-width="0.8"/></svg>
<svg class="a" style="left:516.7px;top:115.0px" width="5" height="3"><path d="M0 0 L5 0 L2.5 3Z" fill="#8a8a8a"/></svg>
<svg class="a" style="left:527.5px;top:109px" width="14" height="14" viewBox="0 0 14 14">
<path d="M1 3 L6 1 L13 3 L13 11.5 L6 13.5 L1 11.5Z" fill="#fafafa" stroke="#666" stroke-width="0.9"/><path d="M1 3 L6 4.8 L6 13.5 L1 11.5Z" fill="#6aa6d8" stroke="#3f6f98" stroke-width="0.8"/><path d="M6 4.8 L13 3" stroke="#666" stroke-width="0.8"/></svg>
<svg class="a" style="left:545.0px;top:115.0px" width="5" height="3"><path d="M0 0 L5 0 L2.5 3Z" fill="#8a8a8a"/></svg>
<svg class="a" style="left:556px;top:110px" width="14" height="12" viewBox="0 0 14 12">
<path d="M0.8 6 Q7 -0.5 13.2 6 Q7 12.5 0.8 6Z" fill="#f4f4f4" stroke="#888" stroke-width="1"/><circle cx="7" cy="6" r="2.6" fill="#6a6a6a"/><path d="M7 1 L7 11.5" stroke="#777" stroke-width="0.9"/></svg>
<svg class="a" style="left:573.9px;top:115.0px" width="5" height="3"><path d="M0 0 L5 0 L2.5 3Z" fill="#8a8a8a"/></svg>
<svg class="a" style="left:584px;top:109px" width="15" height="15" viewBox="0 0 15 15">
<circle cx="7.5" cy="6" r="5.5" fill="#e6e6e6" stroke="#d4d4d4" stroke-width="1"/><path d="M4 10 L2.5 13.5" stroke="#d4d4d4" stroke-width="1.6"/></svg>
<svg class="a" style="left:602px;top:109px" width="15" height="14" viewBox="0 0 15 14">
<circle cx="7.5" cy="5.5" r="4.5" fill="#e6e6e6" stroke="#d2d2d2" stroke-width="1"/><path d="M0.8 7 L0.8 13.2 L14.2 13.2 L14.2 7 L7.5 11Z" fill="#eeeeee" stroke="#d0d0d0" stroke-width="1"/></svg>
<svg class="a" style="left:620.7px;top:115.0px" width="5" height="3"><path d="M0 0 L5 0 L2.5 3Z" fill="#8a8a8a"/></svg>
<svg class="a" style="left:631px;top:109.5px" width="15" height="13" viewBox="0 0 15 13">
<rect x="0.7" y="0.7" width="13.6" height="9" fill="#f0f0f0" stroke="#6a6a6a" stroke-width="1.2"/><path d="M7.5 9.7 L7.5 12 M4 12.2 L11 12.2" stroke="#6a6a6a" stroke-width="1.3"/></svg>
<svg class="a" style="left:649.6px;top:115.0px" width="5" height="3"><path d="M0 0 L5 0 L2.5 3Z" fill="#8a8a8a"/></svg>
<svg class="a" style="left:806.5px;top:95.5px" width="10" height="11" viewBox="0 0 10 11"><rect x="0.6" y="0.6" width="8.6" height="9.6" fill="#fbfbfb" stroke="#a8a8a8" stroke-width="1"/><path d="M3 2.5 L3 8.5" stroke="#b0b0b0" stroke-width="0.8"/><path d="M5.8 3.3 L3.6 5.5 L5.8 7.7Z" fill="#888"/></svg>
<svg class="a" style="left:825.3px;top:95.5px" width="10" height="11" viewBox="0 0 10 11"><rect x="0.6" y="0.6" width="8.6" height="9.6" fill="#fbfbfb" stroke="#a8a8a8" stroke-width="1"/><path d="M6.8 2.5 L6.8 8.5" stroke="#b0b0b0" stroke-width="0.8"/><path d="M4 3.3 L6.2 5.5 L4 7.7Z" fill="#888"/></svg>
<div class="a" style="left:845px;top:102.6px;width:7px;height:1.8px;background:#9a9a9a;"></div>
<svg class="a" style="left:862px;top:95.5px" width="10" height="9" viewBox="0 0 10 9"><rect x="0.5" y="3.5" width="6.5" height="5" fill="#fff" stroke="#999" stroke-width="1"/><path d="M3 3.5 L3 1 L9.5 1 L9.5 6 L7 6" fill="none" stroke="#999" stroke-width="1"/></svg>
<svg class="a" style="left:882px;top:96.5px" width="8" height="8"><path d="M0.5 0.5 L7.5 7.5 M7.5 0.5 L0.5 7.5" stroke="#999" stroke-width="1"/></svg>
<svg class="a" style="left:826px;top:131px" width="21" height="16" viewBox="0 0 21 16"><path d="M1.5 7.5 L7.5 13 L19.5 2" fill="none" stroke="#cfe6cb" stroke-width="4"/></svg>
<svg class="a" style="left:857.5px;top:151.5px" width="19" height="19" viewBox="0 0 19 19"><path d="M2.3 2.3 L16.7 16.7 M16.7 2.3 L2.3 16.7" stroke="#f3cbcb" stroke-width="4"/></svg>
<div class="a" style="left:881px;top:144px;width:19px;height:119px;background:#d6d6d6;border:1px solid #a9a9a9;border-right:none"></div>
<div class="a" style="left:882px;top:160.3px;width:18px;height:1px;background:#b0b0b0;"></div>
<div class="a" style="left:882px;top:177.2px;width:18px;height:1px;background:#b0b0b0;"></div>
<div class="a" style="left:882px;top:193.9px;width:18px;height:1px;background:#b0b0b0;"></div>
<div class="a" style="left:882px;top:211.2px;width:18px;height:1px;background:#b0b0b0;"></div>
<div class="a" style="left:882px;top:228.4px;width:18px;height:1px;background:#b0b0b0;"></div>
<div class="a" style="left:882px;top:245.7px;width:18px;height:1px;background:#b0b0b0;"></div>
<div class="a" style="left:882px;top:229px;width:18px;height:16.5px;background:#f6f6f6;"></div>
<svg class="a" style="left:883px;top:145px" width="16" height="15" viewBox="0 0 16 15"><defs><radialGradient id="swr" cx="0.4" cy="0.35" r="0.7"><stop offset="0" stop-color="#7aa6c8"/><stop offset="0.6" stop-color="#2c5478"/><stop offset="1" stop-color="#142a3e"/></radialGradient></defs><circle cx="8" cy="7.5" r="6.8" fill="url(#swr)" stroke="#1a3045" stroke-width="0.7"/><circle cx="8" cy="7.5" r="2.2" fill="none" stroke="#9cc0dc" stroke-width="0.8"/><circle cx="3.5" cy="7.5" r="0.6" fill="#cde"/><circle cx="12.5" cy="7.5" r="0.6" fill="#cde"/><circle cx="8" cy="12" r="0.6" fill="#cde"/><circle cx="8" cy="3" r="0.6" fill="#cde"/></svg>
<svg class="a" style="left:883.5px;top:161.5px" width="15" height="15" viewBox="0 0 15 15"><path d="M1 7.5 L7.5 1.2 L14 7.5" fill="none" stroke="#2f5f8e" stroke-width="2"/><path d="M3 7 L3 14 L12 14 L12 7" fill="#fff" stroke="#333" stroke-width="1"/><rect x="6" y="9" width="3" height="5" fill="#fff" stroke="#333" stroke-width="0.8"/></svg>
<svg class="a" style="left:884px;top:178.5px" width="14" height="15" viewBox="0 0 14 15"><path d="M1 3 L4 1.5 L7 3 L10 1.5 L13 3 L13 13 L10 14 L7 13 L4 14 L1 13Z" fill="#f2f2f2" stroke="#444" stroke-width="0.9"/><path d="M4 1.5 L4 14 M7 3 L7 13 M10 1.5 L10 14" stroke="#444" stroke-width="0.8"/></svg>
<svg class="a" style="left:883.5px;top:196px" width="15" height="13" viewBox="0 0 15 13"><path d="M1 1 L5.5 1 L6.5 2.5 L12 2.5 L12 4.5 L4 4.5 L1 12 Z" fill="#f4f4f4" stroke="#444" stroke-width="0.9"/><path d="M4 4.5 L14.5 4.5 L11.5 12 L1 12Z" fill="#fafafa" stroke="#444" stroke-width="0.9"/></svg>
<svg class="a" style="left:883.5px;top:212.5px" width="15" height="15" viewBox="0 0 15 15"><rect x="0.7" y="0.7" width="13.6" height="13.6" fill="#ececec" stroke="#666" stroke-width="0.9"/><path d="M2.5 4 L9 4 M5.5 4 L5.5 8 M3 12.5 L5.5 8.5 L8 12.5Z" fill="#e8b000" stroke="#d89a00" stroke-width="1.7"/><rect x="10" y="2.5" width="3" height="2" fill="#e8b000"/><rect x="10.5" y="8" width="2" height="5" fill="#333"/><path d="M1.5 12.8 L13.5 12.8" stroke="#555" stroke-width="0.8"/></svg>
<svg class="a" style="left:883.5px;top:229.5px" width="15" height="15" viewBox="0 0 15 15">
<circle cx="7.5" cy="7.5" r="6.3" fill="#e23a2a"/><path d="M7.5 7.5 L1.2 6 A6.3 6.3 0 0 1 6 1.3Z" fill="#2a7de0"/><path d="M7.5 7.5 L1.2 9 A6.3 6.3 0 0 0 6 13.7Z" fill="#3aaa3a"/><path d="M7.5 7.5 L13.8 9 A6.3 6.3 0 0 1 6 13.7Z" fill="#e8c020"/><circle cx="7.5" cy="7.5" r="6.3" fill="none" stroke="#7a5a20" stroke-width="0.7"/></svg>
<svg class="a" style="left:883.5px;top:247px" width="15" height="15" viewBox="0 0 15 15"><rect x="0.7" y="0.7" width="13.6" height="13.6" fill="#f4f6f8" stroke="#355f88" stroke-width="1"/><rect x="0.7" y="0.7" width="13.6" height="2.6" fill="#3f79b0"/><rect x="2.3" y="5" width="2.2" height="1.8" fill="#2f6aa0"/><rect x="2.3" y="8" width="2.2" height="1.8" fill="#2f6aa0"/><rect x="2.3" y="11" width="2.2" height="1.8" fill="#2f6aa0"/><path d="M5.5 5.9 L12.8 5.9 M5.5 8.9 L12.8 8.9 M5.5 11.9 L12.8 11.9" stroke="#777" stroke-width="0.9"/></svg>
<svg class="a" style="left:180px;top:680px" width="45" height="45" viewBox="0 0 45 45">
<path d="M12.5 34 L12.5 17" stroke="#3b8f3b" stroke-width="2.2"/><path d="M9.3 19 L12.5 12.8 L15.7 19Z" fill="#2a6a2a" stroke="#1f4f1f" stroke-width="0.6"/>
<path d="M12.5 34 L29 34" stroke="#d84040" stroke-width="2.2"/><path d="M27.5 30.8 L34 34 L27.5 37.2Z" fill="#c83030" stroke="#902020" stroke-width="0.6"/>
<circle cx="12.5" cy="34" r="3" fill="#1a2aa8"/>
<path d="M10.2 5.3 L12.5 8 L14.8 5.3 M12.5 8 L12.5 11" fill="none" stroke="#5a9a5a" stroke-width="0.9"/>
<path d="M35.2 31.5 L38.5 36.5 M38.5 31.5 L35.2 36.5" fill="none" stroke="#c84040" stroke-width="0.9"/></svg>
<div class="t" style="left:172.2px;top:744.6px;font-size:8.4px;font-weight:bold;color:#111;letter-spacing:0.72px;-webkit-text-stroke-width:0.35px">*Vorderseite</div>
<div class="a" style="left:0px;top:756px;width:900px;height:11px;background:#f4f4f4;"></div>
<div class="a" style="left:0px;top:756px;width:900px;height:1px;background:#a5a5a5;"></div>
<div class="a" style="left:0px;top:767px;width:900px;height:1px;background:#b3b3b3;"></div>
<div class="a" style="left:898.5px;top:756px;width:1px;height:11px;background:#a5a5a5;"></div>
<div class="a" style="left:2px;top:757px;width:1px;height:10px;background:#6a8fb0;"></div>
<div class="a" style="left:5px;top:757px;width:14px;height:10px;background:#ffffff;"></div>
<div class="a" style="left:19.4px;top:757px;width:46px;height:10px;background:#d0d0d0;border:1px solid #bdbdbd"></div>
<svg class="a" style="left:21px;top:758px" width="44" height="8" viewBox="0 0 44 8">
<path d="M2 1 L2 7 M6.5 1 L3 4 L6.5 7Z M15 1 L11.5 4 L15 7Z M26 1 L29.5 4 L26 7Z M35 1 L38.5 4 L35 7Z M39.5 1 L39.5 7" fill="#bcbcbc" stroke="#bcbcbc" stroke-width="0.8"/>
<path d="M9.5 0 L9.5 8 M20.5 0 L20.5 8 M32 0 L32 8" stroke="#e4e4e4" stroke-width="0.8"/></svg>
<div class="t" style="left:74.4px;top:757.7px;font-size:8.4px;font-weight:bold;color:#111;letter-spacing:0.2px;-webkit-text-stroke-width:0.3px">Modell</div>
<div class="a" style="left:108.3px;top:757px;width:94px;height:10px;background:#d6d6d6;border:1px solid #b0b0b0;border-top:none"></div>
<div class="t" style="left:116.7px;top:757.7px;font-size:8.9px;color:#222;transform:scaleX(0.94);transform-origin:0 0;">Bewegungsstudie 1</div>
<div class="a" style="left:0px;top:768px;width:900px;height:11px;background:#f4f4f2;"></div>
<div class="a" style="left:0px;top:779px;width:900px;height:1px;background:#fbfbfb;"></div>
<div class="a" style="left:0px;top:780px;width:900px;height:1px;background:#5a7482;"></div>
<div class="t" style="left:0.8px;top:770.1px;font-size:8.9px;color:#1a1a1a;transform:scaleX(0.88);transform-origin:0 0;">SOLIDWORKS Premium 2020 SP1.0</div>
<div class="t" style="left:474.7px;top:770.1px;font-size:8.9px;color:#1a1a1a;transform:scaleX(0.93);transform-origin:0 0;">Länge: 550mm</div>
<div class="t" style="left:537.3px;top:770.1px;font-size:8.9px;color:#1a1a1a;transform:scaleX(0.97);transform-origin:0 0;">Voll definiert</div>
<div class="t" style="left:598.1px;top:770.1px;font-size:8.9px;color:#1a1a1a;transform:scaleX(0.945);transform-origin:0 0;">Bearbeiten Baugruppe</div>
<svg class="a" style="left:702px;top:768px" width="11" height="11" viewBox="0 0 11 11"><path d="M0.5 9 L4 1.5 L7.5 9Z" fill="#f0c020" stroke="#8a6a00" stroke-width="0.7"/><rect x="0.5" y="8.5" width="9" height="2" fill="#2a5f9e"/><path d="M6 6 L10 2 M7.5 1.8 L10.2 1.8 L10.2 4.5" fill="none" stroke="#222" stroke-width="1.2"/></svg>
<div class="t" style="left:788.4px;top:769.5px;font-size:8.9px;color:#b0b0b0;transform:scaleX(0.915);transform-origin:0 0;">MMGS</div>
<svg class="a" style="left:849.8px;top:773px" width="4" height="2.5"><path d="M0 2.5 L2 0 L4 2.5Z" fill="#666"/></svg>
<svg class="a" style="left:872.5px;top:769px" width="12" height="11" viewBox="0 0 12 11"><path d="M1.5 2.5 L4.5 0.8 L11 4.5 L10.5 7.5 L6.5 10.2 L0.8 6Z" fill="#f0f0f0" stroke="#333" stroke-width="1.1" stroke-linejoin="round"/><path d="M4 4 Q5.5 6.5 8 5" fill="none" stroke="#444" stroke-width="0.9"/></svg>
<svg class="a" style="left:892px;top:772px" width="7" height="8"><path d="M6 0.5 L6 1.5 M6 3 L6 4 M3.5 3 L3.5 4 M6 5.5 L6 6.5 M3.5 5.5 L3.5 6.5 M1 5.5 L1 6.5" stroke="#b5b5b5" stroke-width="1"/></svg>
</body></html>
